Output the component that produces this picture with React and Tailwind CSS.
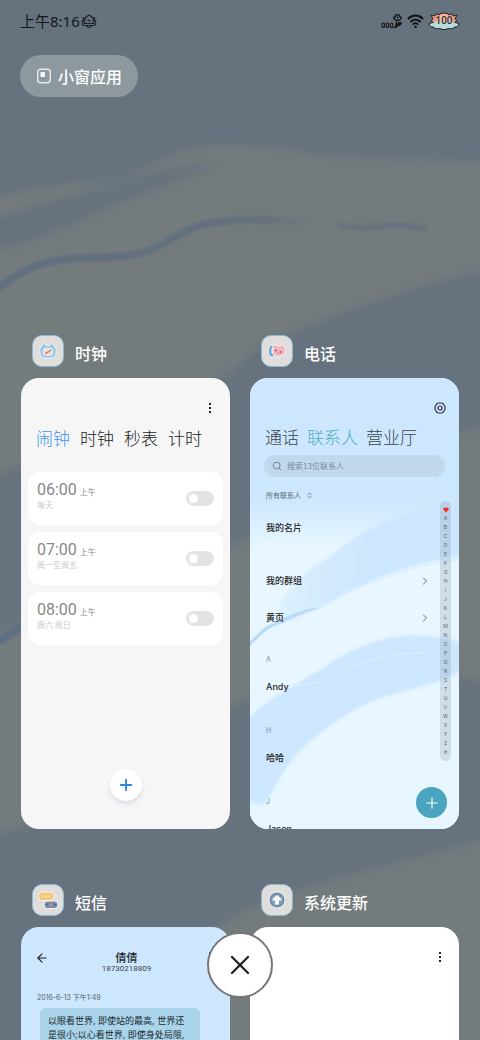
import React, { useState } from 'react';
import { ArrowLeft, ChevronRight, Plus, Search, X } from 'lucide-react';

const alarms = [
  { time: '06:00', period: '上午', repeat: '每天' },
  { time: '07:00', period: '上午', repeat: '周一至周五' },
  { time: '08:00', period: '上午', repeat: '周六 周日' },
];

const indexLetters = 'ABCDEFGHIJKLMNOPQRSTUVWXYZ#'.split('');

function Wallpaper() {
  return (
    <svg
      className="absolute inset-0 w-full h-full"
      viewBox="0 0 480 1040"
      preserveAspectRatio="xMidYMid slice"
      aria-hidden="true"
    >
      <defs>
        <filter id="soft" x="-10%" y="-10%" width="120%" height="120%">
          <feGaussianBlur stdDeviation="4" />
        </filter>
        <filter id="edge" x="-10%" y="-30%" width="120%" height="160%">
          <feGaussianBlur stdDeviation="1" />
        </filter>
        <linearGradient id="brush" gradientUnits="userSpaceOnUse" x1="0" y1="0" x2="315" y2="0">
          <stop offset="0" stopColor="#61707f" />
          <stop offset="0.85" stopColor="#65717d" />
          <stop offset="1" stopColor="#747b7d" />
        </linearGradient>
      </defs>
      <rect width="480" height="1040" fill="#747b7d" />
      <g filter="url(#soft)" fill="#66727e">
        <path d="M-20 -20H500V162C440 160 370 160 310 154C270 146 215 140 180 152C150 162 130 180 100 183C60 184 30 188 -20 202Z" />
        <path d="M-20 222C30 208 80 192 120 184C150 170 180 164 220 165C180 180 130 198 90 216C60 232 30 240 -20 256Z" />
        <path d="M500 268C440 278 380 298 330 318C280 336 255 345 240 365C215 385 180 400 120 430C60 458 20 465 -20 480V640C50 620 120 580 190 565C270 540 380 440 500 425Z" />
        <path d="M500 685C420 665 300 670 200 720C130 770 60 825 -20 838V1060H80C140 1010 180 950 240 912C310 880 400 865 500 835Z" />
      </g>
      <g filter="url(#edge)" fill="none">
        <path d="M-4 290C15 274 40 261 68 259C100 256 130 260 155 248C180 236 190 224 225 221C250 218 280 220 312 223" stroke="url(#brush)" strokeWidth="8" />
        <path d="M341 225C365 232 385 221 424 228" stroke="#68737d" strokeWidth="7" strokeLinecap="round" />
        <path d="M-4 643C6 638 14 631 28 624" stroke="#5b6e83" strokeWidth="7" />
      </g>
    </svg>
  );
}

function ContactsWallpaper() {
  return (
    <svg
      className="absolute inset-0 w-full h-full"
      viewBox="0 0 209 451"
      preserveAspectRatio="none"
      aria-hidden="true"
    >
      <defs>
        <linearGradient id="sky" x1="0" y1="0" x2="0" y2="1">
          <stop offset="0.27" stopColor="#cde7fe" />
          <stop offset="0.38" stopColor="#e8f7ff" />
        </linearGradient>
        <linearGradient id="ridge" x1="0" y1="0" x2="1" y2="0">
          <stop offset="0" stopColor="#cde7fe" stopOpacity="0.4" />
          <stop offset="0.5" stopColor="#cde7fe" />
        </linearGradient>
        <filter id="cloud" x="-10%" y="-10%" width="120%" height="120%">
          <feGaussianBlur stdDeviation="1.5" />
        </filter>
      </defs>
      <rect width="209" height="451" fill="url(#sky)" />
      <g filter="url(#cloud)">
        <path d="M22 250C28 222 50 194 75 182C95 165 125 145 160 135L215 115V178C170 182 130 200 95 216C70 232 50 240 22 250Z" fill="url(#ridge)" />
        <path d="M-5 344C15 322 40 310 70 292C100 270 130 258 165 257C190 258 205 262 215 266V292C185 308 150 312 120 324C90 338 55 365 40 385C28 400 22 420 12 428L-5 422Z" fill="#cde7fe" />
      </g>
      <path d="M0 263C8 257 12 249 22 246C36 239 52 230 72 229C56 234 44 239 32 245C20 249 14 254 8 260L0 268Z" fill="#b9dbf8" />
      <path d="M34 309C60 306 70 306 82 299C105 288 130 274 178 275" fill="none" stroke="#dff1ff" strokeWidth="1" />
      <path d="M120 205C145 194 165 186 209 181" fill="none" stroke="#dcf0ff" strokeWidth="4" />
    </svg>
  );
}

function FlowerSignal() {
  return (
    <svg className="w-[22px] h-4" viewBox="0 0 22 16" fill="none" stroke="#15181b" aria-label="信号">
      <rect x="1" y="10" width="2.4" height="4.4" rx="1" strokeWidth="1.1" />
      <rect x="5.2" y="10" width="2.4" height="4.4" rx="1" strokeWidth="1.1" />
      <rect x="9.4" y="10" width="2.4" height="4.4" rx="1" strokeWidth="1.1" />
      <path d="M16.5 2c1.4-.8 2.4.2 2.1 1.4 1.6.2 2.1 1.7.9 2.500-.4 1.700-1.800 1.900-3 1.100-1.200.8-2.600.6-3-1.100-1.200-.8-.7-2.300.9-2.500C14.100 2.200 15.100 1.200 16.500 2z" strokeWidth="1.400" />
      <circle cx="16.500" cy="4.600" r=".6" fill="#15181b" />
      <path d="M16 8.500L14.500 14M12.800 14.500c2.500.5 3.500-1 3.500-2.500" strokeWidth="1.500" />
      <path d="M16 12c1-2.500 3-3 4.500-2.500 0 2-1.500 3.500-4.500 3.500z" fill="#15181b" />
    </svg>
  );
}

function WifiMark() {
  return (
    <svg className="w-[17px] h-4" viewBox="0 0 17 16" fill="none" stroke="#0f1113" strokeLinecap="round" aria-label="Wi-Fi">
      <path d="M1.500 5.500C5.500 1.500 11.500 1.500 15.500 5.500" strokeWidth="2" />
      <path d="M4 8.500C6.500 6 10.500 6 13 8.500" strokeWidth="1.900" />
      <path d="M6.300 11.200C7.600 10 9.400 10 10.700 11.200" strokeWidth="1.700" />
      <circle cx="8.500" cy="13.800" r=".8" fill="#0f1113" />
    </svg>
  );
}

function LotusBattery() {
  return (
    <div className="relative w-8 h-5 flex items-center justify-center">
      <svg className="absolute inset-0 w-full h-full" viewBox="0 0 32 20" strokeLinejoin="round" aria-hidden="true">
        <path
          d="M5 13L3.500 9L5 8L3 4L7 5L8 2.500L11 4L13 2L14.500 3L16 1L17.500 3L19 2L21 4L24 2.500L25 5L29 4L27 8L28.500 9L27 13Z"
          fill="#ef9d8b"
          stroke="#222"
        />
        <path d="M9 13C8 8 12 4 16 3C20 4 24 8 23 13Z" fill="#f6bca2" />
        <path
          d="M1 12.500L5 11.500L8 13L12 11.500L16 13L20 11.500L24 13L27 11.500L31 12.500C31 15 29 16 27 16C25 18 22 18 20 17.500C18 19 14 19 12 17.500C10 18 7 18 5 16C3 16 1 15 1 12.500Z"
          fill="#b5dcd9"
          stroke="#222"
        />
        <path d="M4 12.500L8 10.500H24L28 12.500L22 15.500H10Z" fill="#b5dcd9" />
      </svg>
      <span className="relative font-['Roboto',sans-serif] text-[10px] leading-none font-medium text-[#33302f]">100</span>
    </div>
  );
}

function AlarmBadge() {
  return (
    <svg className="w-4 h-4" viewBox="0 0 16 16" fill="none" stroke="#1b2025" strokeWidth="1.200" strokeLinejoin="round" aria-hidden="true">
      <path d="M3.500 10.500L4 5L6.500 3L8 2L9.500 3L12 5L12.500 10.500Z" />
      <path d="M4 4.500L2.200 5L2.500 7L1 8.500L2 10L1.200 11.500L3 12.500H13L14.800 11.500L14 10L15 8.500L13.500 7L13.800 5L12 4.500" />
      <path d="M5.500 12.500L6.500 14L8 14.500L9.500 14L10.500 12.500M6.500 6.500L9.500 8.500" />
    </svg>
  );
}

function StatusBar() {
  return (
    <header className="h-[42px] px-5 flex items-center justify-between text-[#15181b]">
      <div className="flex items-center gap-px font-['Noto_Sans','Noto_Sans_CJK_SC',sans-serif] text-[15px] leading-5">
        <span>上午8:16</span>
        <AlarmBadge />
      </div>
      <div className="flex items-center gap-1">
        <FlowerSignal />
        <WifiMark />
        <LotusBattery />
      </div>
    </header>
  );
}

function ClockIcon() {
  return (
    <>
      <path d="M10 11L12 8L14 10.500H18L20 8L22 11C24 12 24.500 14 24 18C23.500 22 21 23 16 23C11 23 8.500 22 8 18C7.500 14 8 12 10 11Z" fill="#8fc3e6" stroke="#f4f4f2" />
      <rect x="10.500" y="12.500" width="11" height="8.500" rx="3" fill="#e6e2dc" />
      <path d="M15.500 17.500L19 15" stroke="#5b6a7a" strokeLinecap="round" />
      <path d="M13.500 18.500L16 17" stroke="#ee5a5a" strokeLinecap="round" strokeWidth="1.200" />
    </>
  );
}

function PhoneIcon() {
  return (
    <>
      <path d="M11 10C6 10 6 22 11 22L13.500 21.500L12.500 18.500H11V13.500H12.500L13 10.500Z" fill="#6fa9d2" stroke="#f4f4f2" />
      <path d="M12 11L14 9L16.500 11H19L22 9L23 11.500C25.500 14 25 20 21.500 20.500C18 22 12 21 11.500 18Z" fill="#f6b3c1" stroke="#f4f4f2" />
      <circle cx="15" cy="15.500" r=".8" fill="#333" />
      <circle cx="19.500" cy="17" r=".8" fill="#333" />
      <circle cx="17" cy="18" r=".8" fill="#e0667f" />
    </>
  );
}

function MessageIcon() {
  return (
    <>
      <path d="M11 8H18C23.500 8 23.500 16.500 18 16.500H11L8 17L7.500 14.500C5 12.500 6.500 8.500 11 8Z" fill="#f5c678" stroke="#f4f4f2" />
      <path d="M10.500 12.500H18" stroke="#f9e0b2" strokeWidth="2" strokeDasharray="2 1" />
      <rect x="12" y="17" width="14" height="7.500" rx="3.500" fill="#6f8ba6" stroke="#f4f4f2" />
      <path d="M19 22.500L17 20.300L18.200 19.500L19 20.200L19.800 19.500L21 20.300Z" fill="#f37b8b" />
      <circle cx="15" cy="20.500" r=".6" fill="#2e4358" />
      <circle cx="23" cy="20.500" r=".6" fill="#2e4358" />
    </>
  );
}

function UpdateIcon() {
  return (
    <>
      <circle cx="16" cy="16" r="8" fill="#7d9dbf" stroke="#f4f4f2" />
      <circle cx="16" cy="16" r="6.800" fill="none" stroke="#62809f" />
      <path d="M16 11L20.500 15V16.500H18V20.500H14V16.500H11.500V15Z" fill="#fbf8ee" />
    </>
  );
}

function AppTile({ name, icon, bg, children }) {
  return (
    <article className="flex flex-col gap-[11px]">
      <div className="flex items-center gap-[11px] pl-[11px]">
        <svg className="w-8 h-8" viewBox="0 0 32 32" fill="none" aria-hidden="true">
          <rect x=".5" y=".5" width="31" height="31" rx="9.500" fill="#dfdedc" stroke="#8db9d1" />
          {icon}
        </svg>
        <h2 className="pt-1 text-[16px] leading-6 font-medium text-white">{name}</h2>
      </div>
      <div className={`relative h-[451px] overflow-hidden rounded-[18px] ${bg}`}>{children}</div>
    </article>
  );
}

function MoreButton() {
  return (
    <button type="button" aria-label="更多" className="flex h-3 w-3 flex-col items-center justify-center gap-[2px]">
      <span className="h-[2px] w-[2px] bg-[#222]" />
      <span className="h-[2px] w-[2px] bg-[#222]" />
      <span className="h-[2px] w-[2px] bg-[#222]" />
    </button>
  );
}

function ClockScreen() {
  const [on, setOn] = useState([false, false, false]);
  const toggle = (i) => setOn(on.map((v, n) => (n === i ? !v : v)));

  return (
    <div className="flex h-full flex-col px-[7px] pt-6">
      <div className="flex justify-end pr-[7px]">
        <MoreButton />
      </div>
      <nav className="mt-3 flex gap-[10px] pl-2 text-[17px] leading-6 font-light text-[#222]">
        <button type="button" className="text-[#3b93e6]">闹钟</button>
        <button type="button">时钟</button>
        <button type="button">秒表</button>
        <button type="button">计时</button>
      </nav>
      <ul className="mt-[22px] flex flex-col gap-[7px]">
        {alarms.map((a, i) => (
          <li key={a.time} className="flex h-[53px] items-center justify-between rounded-xl bg-white pl-[9px] pr-[9px]">
            <div className="flex h-full flex-col pt-[9px]">
              <div className="flex items-baseline gap-[3px] text-[#888]">
                <span className="font-['Roboto',sans-serif] text-[16px] leading-[18px]">{a.time}</span>
                <span className="text-[8px] leading-[10px]">{a.period}</span>
              </div>
              <span className="text-[8px] leading-[11px] text-[#c9c9c9]">{a.repeat}</span>
            </div>
            <input
              type="checkbox"
              role="switch"
              aria-label={`${a.time} ${a.period}`}
              checked={on[i]}
              onChange={() => toggle(i)}
              className="h-[15px] w-7 appearance-none rounded-full bg-[#e3e3e3] p-[3px] before:block before:h-[9px] before:w-[9px] before:rounded-full before:bg-white checked:bg-[#3b93e6] checked:before:ml-auto"
            />
          </li>
        ))}
      </ul>
      <button
        type="button"
        aria-label="添加闹钟"
        className="mx-auto mt-auto mb-7 flex h-8 w-8 items-center justify-center rounded-full bg-white text-[#2f86e0] shadow-md shadow-blue-900/10"
      >
        <Plus size={18} strokeWidth={2.5} />
      </button>
    </div>
  );
}

function LinkRow({ label }) {
  return (
    <button type="button" className="flex h-[37px] w-full items-center justify-between pr-[9px] text-left">
      {label}
      <ChevronRight size={12} strokeWidth={2} className="text-[#5c6b78]" />
    </button>
  );
}

function Contact({ letter, name }) {
  return (
    <section className="h-[71px] pt-[19px]">
      <h3 className="font-['Inter',sans-serif] text-[7px] leading-[10px] font-normal text-[#7d8a94]">{letter}</h3>
      <p className="pt-3 font-['Inter','Noto_Sans_CJK_SC',sans-serif] leading-[20px]">{name}</p>
    </section>
  );
}

function ContactsScreen() {
  return (
    <>
      <ContactsWallpaper />
      <div className="relative flex h-full flex-col pt-6">
        <div className="flex justify-end pr-[13px]">
          <button type="button" aria-label="设置">
            <svg className="h-3 w-3" viewBox="0 0 12 12" fill="none" stroke="#33383d" strokeWidth="1.200" strokeLinejoin="round">
              <path d="M4.200 1H7.800L9.300 1.900L11 4.800V7.200L9.300 10.100L7.800 11H4.200L2.700 10.100L1 7.200V4.800L2.700 1.900Z" />
              <circle cx="6" cy="6" r="2" />
            </svg>
          </button>
        </div>
        <nav className="mt-[11px] flex gap-2 pl-[15px] text-[17px] leading-6 font-light text-[#3c444b]">
          <button type="button">通话</button>
          <button type="button" className="text-[#4fadc2]">联系人</button>
          <button type="button">营业厅</button>
        </nav>
        <label className="mx-[14px] mt-[6px] flex h-[22px] items-center gap-[5px] rounded-full bg-[#c2d8ed] px-2 text-[#7a8a99]">
          <Search size={10} strokeWidth={2.5} className="shrink-0" />
          <input
            type="text"
            aria-label="搜索联系人"
            placeholder="搜索13位联系人"
            className="w-full min-w-0 bg-transparent text-[8px] leading-3 outline-none placeholder:text-[#7a8a99]"
          />
        </label>
        <div className="flex min-h-0 flex-1 pl-[16px] pr-2">
          <div className="min-w-0 flex-1 text-[9px] font-medium text-[#1f2529]">
            <button type="button" className="mt-3 flex h-3 items-center gap-[6px] text-[7px] font-normal text-[#5d6a75]">
              所有联系人
              <svg className="h-[7px] w-[5px]" viewBox="0 0 6 8" fill="none" stroke="#75828d" strokeLinecap="round" strokeLinejoin="round" aria-hidden="true">
                <path d="M1 3L3 1L5 3M1 5L3 7L5 5" />
              </svg>
            </button>
            <div className="mt-2 flex h-[37px] items-center">我的名片</div>
            <div className="mt-4">
              <LinkRow label="我的群组" />
              <LinkRow label="黄页" />
            </div>
            <Contact letter="A" name="Andy" />
            <Contact letter="H" name="哈哈" />
            <Contact letter="J" name="Jason" />
          </div>
          <ol className="mt-[24px] flex h-[260px] w-[11px] flex-col items-center justify-between rounded-full bg-[#7f93a5]/25 pt-1 pb-1 font-['Inter',sans-serif] text-[5px] leading-[9px] text-[#5a6670]">
            <li>
              <svg className="h-[9px] w-[6px]" viewBox="0 0 6 9" fill="#ff2b2b" aria-label="收藏">
                <path d="M3 7.500L.4 4.800C-.4 3 1.800 1.500 3 3C4.200 1.500 6.400 3 5.600 4.800Z" />
              </svg>
            </li>
            {indexLetters.map((l) => (
              <li key={l}>{l}</li>
            ))}
          </ol>
        </div>
      </div>
      <button
        type="button"
        aria-label="新建联系人"
        className="absolute right-3 bottom-[11px] flex h-[31px] w-[31px] items-center justify-center rounded-full bg-[#4aa4bf] text-white"
      >
        <Plus size={18} strokeWidth={1.5} />
      </button>
    </>
  );
}

function MessagesScreen() {
  return (
    <div className="px-[14px] pt-6">
      <div className="flex items-start justify-between">
        <button type="button" aria-label="返回" className="text-[#222]">
          <ArrowLeft size={14} strokeWidth={2} />
        </button>
        <div className="text-center">
          <h3 className="text-[11px] leading-3 font-medium text-[#1f2529]">倩倩</h3>
          <p className="font-['Roboto',sans-serif] text-[8px] leading-3 text-[#3a4248]">18730218809</p>
        </div>
        <MoreButton />
      </div>
      <p className="mt-[17px] pl-[2px] font-['Inter','Noto_Sans_CJK_SC',sans-serif] text-[7px] leading-3 text-[#56626c]">
        2016-6-13 下午1:49
      </p>
      <p className="mt-1 ml-[5px] mr-[16px] rounded-t-md bg-[#a9d4ea] px-2 py-[6px] font-['Inter','Noto_Sans_CJK_SC',sans-serif] text-[9px] leading-[14px] text-[#20282e]">
        以眼看世界, 即使站的最高, 世界还
        <br />
        是很小;以心看世界, 即使身处局限,
      </p>
    </div>
  );
}

function UpdateScreen() {
  return (
    <div className="flex justify-end pt-6 pr-[13px]">
      <MoreButton />
    </div>
  );
}

export default function App() {
  return (
    <main className="relative h-screen overflow-hidden bg-[#747b7d] font-['Noto_Sans_CJK_SC',sans-serif]">
      <Wallpaper />
      <div className="relative">
        <StatusBar />
        <div className="mt-[13px] px-5">
          <button type="button" className="flex h-[42px] items-center gap-[6px] rounded-full bg-[#8e989f] pl-4 pr-4 text-[16px] font-medium text-white">
            <svg className="h-4 w-4" viewBox="0 0 16 16" fill="none" aria-hidden="true">
              <rect x="1.700" y="1.200" width="12.600" height="13.600" rx="3" stroke="#e8ebed" strokeWidth="1.400" />
              <rect x="4.500" y="4" width="4.500" height="5" fill="#f3f5f6" />
            </svg>
            小窗应用
          </button>
        </div>

        {/* Recent apps */}
        <div className="mt-[238px] grid grid-cols-2 gap-x-5 gap-y-[55px] px-[21px]">
          <AppTile name="时钟" icon={<ClockIcon />} bg="bg-[#f6f6f6]">
            <ClockScreen />
          </AppTile>
          <AppTile name="电话" icon={<PhoneIcon />} bg="bg-[#e8f8ff]">
            <ContactsScreen />
          </AppTile>
          <AppTile name="短信" icon={<MessageIcon />} bg="bg-[#cde7fe]">
            <MessagesScreen />
          </AppTile>
          <AppTile name="系统更新" icon={<UpdateIcon />} bg="bg-white">
            <UpdateScreen />
          </AppTile>
        </div>
      </div>

      {/* Close all */}
      <div className="absolute inset-x-0 bottom-[42px] flex justify-center">
        <button
          type="button"
          aria-label="全部清除"
          className="flex h-[66px] w-[66px] items-center justify-center rounded-full border-2 border-[#777] bg-white text-[#222]"
        >
          <X size={32} strokeWidth={1.750} />
        </button>
      </div>
    </main>
  );
}
